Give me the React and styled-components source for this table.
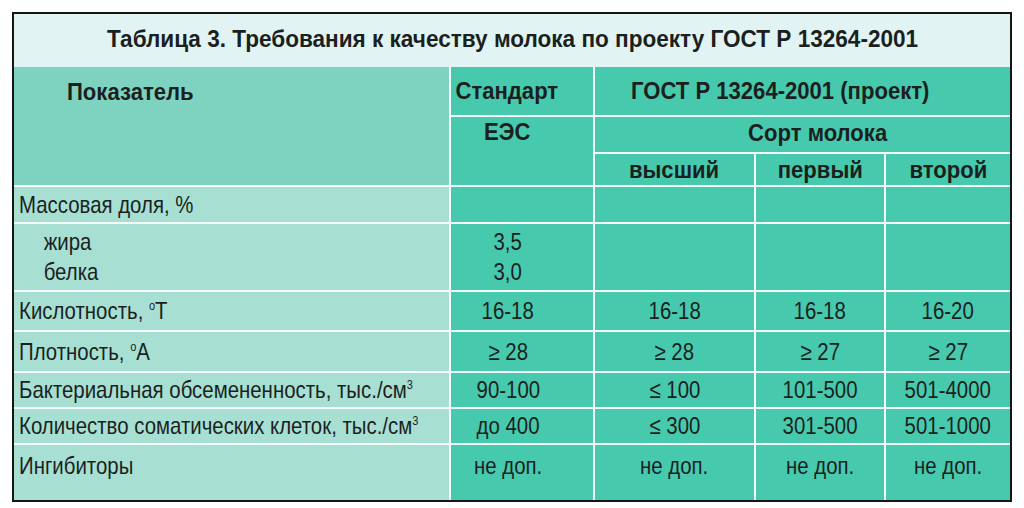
import React from 'react';
import styled, { createGlobalStyle } from 'styled-components';

const GlobalStyle = createGlobalStyle`
html, body {
    margin: 0;
    padding: 0;
    background: #fff;
}
body {
    font-family: "Liberation Sans", Arial, sans-serif;
    color: #1b1f1e;
}
`

const Frame = styled.div`
width: 996px;
margin: 12px 0 0 12px;
border: 2px solid #151515;
background: #fff;
`

const Title = styled.div`
height: 53px;
display: flex;
align-items: center;
justify-content: center;
background: #e1f4f3;
font-size: 24px;
font-weight: 700;
& > span {
    display: inline-block;
    transform: scaleX(0.94);
    padding-bottom: 3px;
}
`

const Grid = styled.div`
display: grid;
grid-template-columns: 435px 142px 159px 128px 124px;
grid-template-rows: 48px 35px 31px 35px 66px 38px 39px 34px 34px 55px;
gap: 2px;
background: #f4fbfa;
`

const tones = {
    head: '#7dd3c0',
    side: '#a7e0d3',
    data: '#47c9ad',
}

const Cell = styled.div`
grid-column: ${p => p.$col};
grid-row: ${p => p.$row};
background: ${p => tones[p.$tone || 'data']};
display: flex;
flex-direction: column;
justify-content: ${p => (p.$top ? 'flex-start' : 'center')};
align-items: ${p => (p.$left ? 'flex-start' : 'center')};
padding: ${p => p.$pad || '0'};
font-size: 24px;
line-height: 30px;
font-weight: ${p => (p.$bold ? 700 : 400)};
white-space: nowrap;
box-sizing: border-box;
& > span {
    display: inline-block;
    transform: scaleX(${p => (p.$bold ? 0.92 : 0.85)});
    transform-origin: ${p => (p.$left ? 'left center' : 'center')};
}
`

const Indent = styled.span`
padding-left: 29px;
`

const Sup = styled.sup`
font-size: 13px;
line-height: 0;
vertical-align: 9px;
`

const Side = ({ row, children }) => (
    <Cell $col="1" $row={row} $tone="side" $left $pad="0 0 0 5px">{children}</Cell>
)

const Std = ({ row, children }) => (
    <Cell $col="2" $row={row} $pad="0 28px 0 0">{children}</Cell>
)

const rows = [
    { label: <>Кислотность, <Sup>o</Sup>Т</>, values: ['16-18', '16-18', '16-18', '16-20'] },
    { label: <>Плотность, <Sup>o</Sup>А</>, values: ['≥ 28', '≥ 28', '≥ 27', '≥ 27'] },
    { label: <>Бактериальная обсемененность, тыс./см<Sup>3</Sup></>, values: ['90-100', '≤ 100', '101-500', '501-4000'] },
    { label: <>Количество соматических клеток, тыс./см<Sup>3</Sup></>, values: ['до 400', '≤ 300', '301-500', '501-1000'] },
]

const App = () => {
    return (
        <>
            <GlobalStyle />
            <Frame>
                <Title><span>Таблица 3. Требования к качеству молока по проекту ГОСТ Р 13264-2001</span></Title>
                <Grid>
                    <Cell $col="1" $row="1 / 4" $tone="head" $bold $left $top $pad="10px 0 0 53px"><span>Показатель</span></Cell>
                    <Cell $col="2" $row="1" $bold $pad="0 30px 0 0"><span>Стандарт</span></Cell>
                    <Cell $col="3 / 6" $row="1" $bold $pad="0 44px 0 0"><span>ГОСТ Р 13264-2001 (проект)</span></Cell>
                    <Cell $col="2" $row="2 / 4" $bold $top $pad="0 30px 0 0"><span>ЕЭС</span></Cell>
                    <Cell $col="3 / 6" $row="2" $bold $pad="0 0 4px 30px"><span>Сорт молока</span></Cell>
                    <Cell $col="3" $row="3" $bold><span>высший</span></Cell>
                    <Cell $col="4" $row="3" $bold><span>первый</span></Cell>
                    <Cell $col="5" $row="3" $bold><span>второй</span></Cell>

                    <Side row="4"><span>Массовая доля, %</span></Side>
                    <Std row="4" />
                    <Cell $col="3" $row="4" />
                    <Cell $col="4" $row="4" />
                    <Cell $col="5" $row="4" />

                    <Side row="5">
                        <span><Indent>жира</Indent></span>
                        <span><Indent>белка</Indent></span>
                    </Side>
                    <Std row="5">
                        <span>3,5</span>
                        <span>3,0</span>
                    </Std>
                    <Cell $col="3" $row="5" />
                    <Cell $col="4" $row="5" />
                    <Cell $col="5" $row="5" />

                    {rows.map((r, i) => (
                        <React.Fragment key={i}>
                            <Side row={6 + i}><span>{r.label}</span></Side>
                            <Std row={6 + i}><span>{r.values[0]}</span></Std>
                            <Cell $col="3" $row={6 + i}><span>{r.values[1]}</span></Cell>
                            <Cell $col="4" $row={6 + i}><span>{r.values[2]}</span></Cell>
                            <Cell $col="5" $row={6 + i}><span>{r.values[3]}</span></Cell>
                        </React.Fragment>
                    ))}

                    <Cell $col="1" $row="10" $tone="side" $left $top $pad="6px 0 0 5px"><span>Ингибиторы</span></Cell>
                    <Cell $col="2" $row="10" $top $pad="6px 28px 0 0"><span>не доп.</span></Cell>
                    <Cell $col="3" $row="10" $top $pad="6px 0 0 0"><span>не доп.</span></Cell>
                    <Cell $col="4" $row="10" $top $pad="6px 0 0 0"><span>не доп.</span></Cell>
                    <Cell $col="5" $row="10" $top $pad="6px 0 0 0"><span>не доп.</span></Cell>
                </Grid>
            </Frame>
        </>
    )
}

export default App
